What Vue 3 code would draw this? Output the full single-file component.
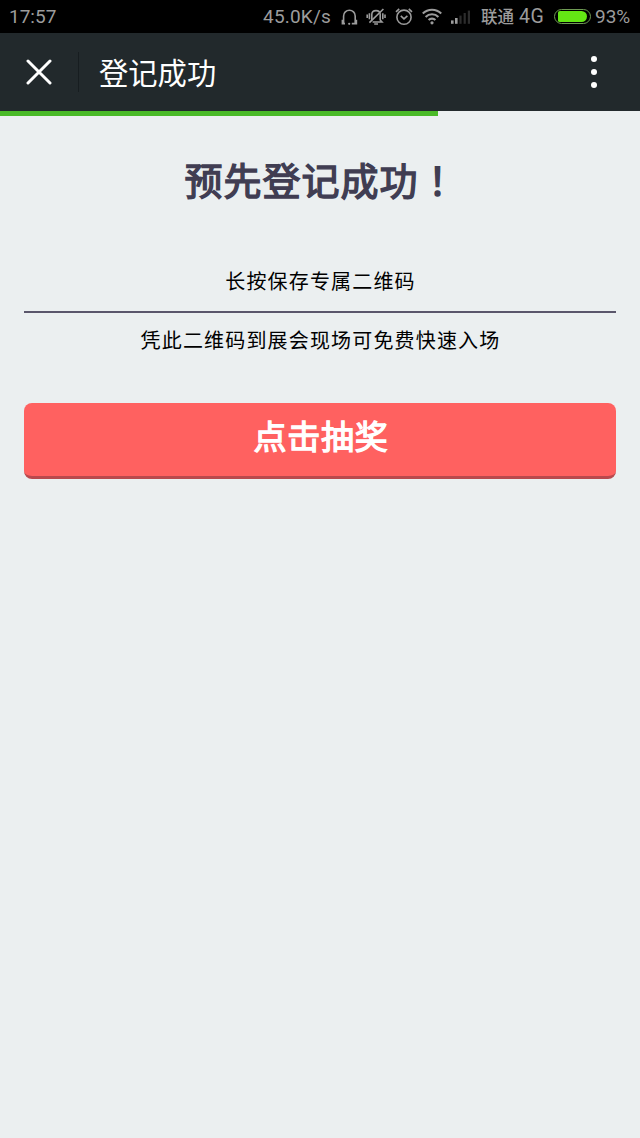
<script setup>
import { ref } from "vue";

const title = ref("登记成功");
const progress = ref(68.5);
const battery = ref(93);
</script>

<template>
    <div class="screen">
        <div class="status">
            <span class="time">17:57</span>
            <span class="speed">45.0K/s</span>
            <svg class="headset" width="20" height="20" viewBox="0 0 20 20">
                <path d="M4.6 16V9a5.8 5.8 0 0 1 11.6 0v7" />
                <path d="M3.4 12.8v3.8h2.6M17.4 12.8v3.8h-4.6" />
                <circle cx="10.2" cy="16.8" r="1.1" />
            </svg>
            <svg class="mute" width="20" height="20" viewBox="0 0 20 20">
                <path d="M5.8 13.2V7.6c0-2.8 2-4 4.2-4s4.2 1.2 4.2 4v5.4l1.8 2H6.6" />
                <path d="M17.4 2L3.4 15.6M8.2 17h3.8" />
                <path d="M3.4 6.2v6M1.2 7.4v3.6M16.8 6.2v6M19 7.4v3.6" />
            </svg>
            <svg class="alarm" width="20" height="20" viewBox="0 0 20 20">
                <circle cx="10" cy="10.2" r="7.1" />
                <path d="M6.8 8.8l3.2 3 3.4-3M2 4.8l3.2-3M18 4.8l-3.2-3" />
            </svg>
            <svg class="wifi" width="20" height="20" viewBox="0 0 20 20">
                <path d="M.8 6.6a13 13 0 0 1 18.4 0M3.6 9.9a9 9 0 0 1 12.8 0M6.6 13a4.8 4.8 0 0 1 6.8 0" />
                <circle cx="10" cy="15.8" r="1.6" />
            </svg>
            <svg class="signal" width="21" height="20" viewBox="0 0 21 20">
                <rect class="on" x="1" y="13.4" width="2.6" height="3.4" />
                <rect class="on" x="5" y="11" width="2.6" height="5.8" />
                <rect x="9.4" y="8.6" width="2.2" height="8.2" />
                <rect x="13.6" y="6" width="2.2" height="10.8" />
                <rect x="17.8" y="3.6" width="2.2" height="13.2" />
            </svg>
            <span class="carrier">联通</span>
            <span class="network">4G</span>
            <div class="battery">
                <div class="level" :style="{ width: battery + '%' }"></div>
            </div>
            <span class="percent">{{ battery }}%</span>
        </div>

        <div class="header">
            <svg class="close" width="26" height="26" viewBox="0 0 26 26">
                <path d="M2 2l22 22M24 2l-22 22" />
            </svg>
            <div class="divider"></div>
            <span class="header-title">{{ title }}</span>
            <div class="more">
                <i></i>
                <i></i>
                <i></i>
            </div>
        </div>
        <div class="progress">
            <div class="progress-bar" :style="{ width: progress + '%' }"></div>
        </div>

        <div class="content">
            <h1>预先登记成功<span class="mark" lang="zh-TW">！</span></h1>
            <p class="tip">长按保存专属二维码</p>
            <p class="tip second">凭此二维码到展会现场可免费快速入场</p>
            <button>点击抽奖</button>
        </div>
    </div>
</template>

<style>
body {
    margin: 0;
    background: #ebeff0;
}
</style>

<style scoped>
.screen {
    width: 640px;
    height: 1138px;
    overflow: hidden;
    background: #ebeff0;
    font-family: "Noto Sans CJK SC", sans-serif;
}

.status {
    display: flex;
    align-items: center;
    height: 33px;
    box-sizing: border-box;
    padding: 0 9px;
    background: #000;
    color: #9c9c9c;
    font-family: Roboto, "Noto Sans CJK SC", sans-serif;
    font-size: 19px;
    line-height: 33px;
    white-space: nowrap;
}

.status svg {
    flex: none;
    fill: none;
    stroke: #9c9c9c;
    stroke-width: 1.6;
}

.time {
    width: 254px;
}

.speed {
    width: 76px;
    letter-spacing: 0.2px;
}

.status .headset circle {
    fill: #9c9c9c;
    stroke: none;
}

.mute {
    margin-left: 7px;
}

.alarm,
.wifi {
    margin-left: 8px;
}

.status .wifi {
    stroke-width: 2.1;
}

.status .wifi circle {
    fill: #9c9c9c;
    stroke: none;
}

.status .signal {
    margin-left: 8px;
    fill: #2c2c2c;
    stroke: none;
}

.status .on {
    fill: #9c9c9c;
}

.carrier {
    width: 38px;
    height: 33px;
    margin-left: 10px;
    font-size: 16.5px;
    font-weight: 500;
    line-height: 35px;
}

.network {
    width: 34px;
    font-size: 19.5px;
    letter-spacing: 0.6px;
}

.battery {
    flex: none;
    box-sizing: border-box;
    width: 37px;
    height: 15px;
    margin-left: 1px;
    padding: 1px 1px 1px 3px;
    border: 1px solid #6f9a54;
    border-radius: 8px;
    display: flex;
}

.level {
    border-radius: 2px 6px 6px 2px;
    background: #64e614;
}

.percent {
    margin-left: 4px;
}

.header {
    display: flex;
    align-items: center;
    height: 78px;
    background: #22292c;
    color: #fff;
}

.close {
    margin-left: 26px;
    fill: none;
    stroke: #fff;
    stroke-width: 3;
    stroke-linecap: round;
}

.divider {
    width: 1px;
    height: 40px;
    margin-left: 26px;
    background: #171d20;
}

.header-title {
    height: 78px;
    margin-left: 20px;
    font-size: 29.3px;
    line-height: 77px;
}

.more {
    display: flex;
    flex-direction: column;
    gap: 7px;
    margin-left: auto;
    margin-right: 43px;
}

.more i {
    width: 6px;
    height: 6px;
    border-radius: 50%;
    background: #fff;
}

.progress {
    height: 5px;
}

.progress-bar {
    height: 5px;
    background: #4aba28;
}

.content {
    padding: 0 24px;
    text-align: center;
}

h1 {
    margin: 33px 0 0;
    padding-left: 2px;
    color: #403d52;
    font-size: 38px;
    font-weight: 400;
    letter-spacing: 1px;
    line-height: 60px;
    -webkit-text-stroke: 1.4px #403d52;
}

.mark {
    font-family: "Noto Sans CJK TC", sans-serif;
    line-height: 1;
}

.tip {
    margin: 57px 0 0;
    padding: 0 0 15px 1px;
    border-bottom: 2px solid #5a566b;
    color: #000;
    font-size: 20px;
    letter-spacing: 1.17px;
    line-height: 30px;
}

.second {
    margin: 12px 0 0;
    padding: 0 0 0 1px;
    border: 0;
}

button {
    display: block;
    width: 592px;
    height: 76px;
    margin: 48px 0 0;
    padding: 0 0 9px 2px;
    border: 0;
    border-bottom: 3px solid #b9494d;
    border-radius: 8px;
    background: #ff6160;
    color: #fff;
    font-family: inherit;
    font-size: 33px;
    font-weight: 400;
    letter-spacing: 0.8px;
    line-height: 60px;
    -webkit-text-stroke: 1.3px #fff;
}
</style>
